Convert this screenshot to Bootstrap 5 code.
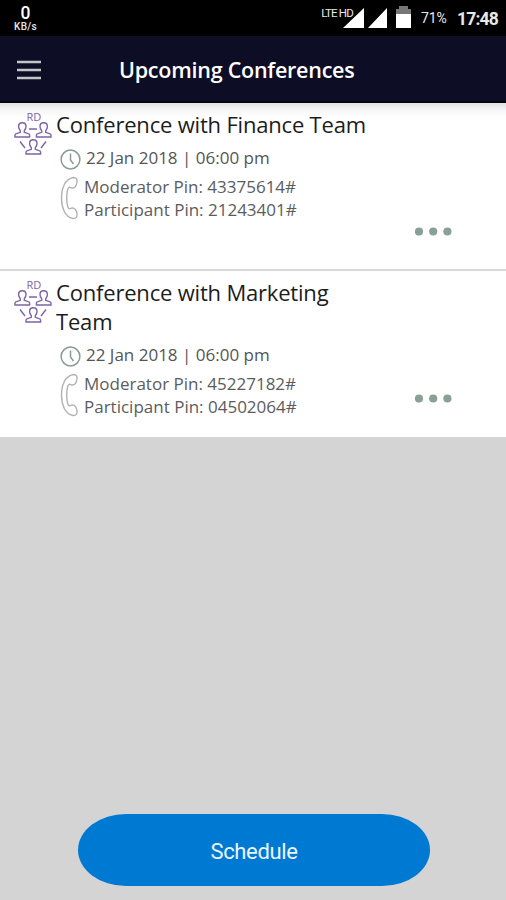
<!DOCTYPE html>
<html lang="en">
<head>
<meta charset="utf-8">
<meta name="viewport" content="width=device-width, initial-scale=1">
<title>Upcoming Conferences</title>
<link href="https://cdn.jsdelivr.net/npm/bootstrap@5.3.0/dist/css/bootstrap.min.css" rel="stylesheet">
<style>
body{background:#d4d4d4;font-family:"Open Sans","Noto Sans",sans-serif;height:900px;overflow:hidden}
svg{display:block;flex:none;overflow:visible}
.statusbar{height:36px;background:#000;color:#e8e8e8;font-family:Roboto,sans-serif;padding:0 10px 0 13px}
.speed{width:25px;padding-top:4px}
.speed-num{font-size:17.5px;line-height:18px;font-weight:500;color:#fff}
.speed-unit{font-size:10px;line-height:10px;font-weight:500;white-space:nowrap;letter-spacing:.3px}
.net{font-size:11.500px;line-height:12px;letter-spacing:-.8px;margin:7px -10px 0 0;white-space:nowrap;position:relative}
.pct{font-size:14px;line-height:36px;letter-spacing:-.1px;margin-left:9px;width:36px}
.clock{font-size:17.5px;line-height:36px;font-weight:700;padding-top:1px;width:39px;white-space:nowrap;letter-spacing:-.8px}
.appbar{height:67px;background:#0d0e25;border-bottom:2px solid #05050d;padding:0 17px}
.appbar svg{margin-top:2px}
.page-title{font-size:21.500px;line-height:30px;font-weight:600;color:#fff;margin:2px 0 0 78px;letter-spacing:-.24px;white-space:nowrap}
.conf{height:168px;background:#fff;border-bottom:2px solid #d9d9d9;padding:7px 54px 0 14px}
.conf:last-child{height:166px;border:0}
.conf:first-child{background:linear-gradient(#e2e2e2,#f6f6f6 7px,#fff 15px)}
.team-icon{margin-top:1px}
.conf-title{font-size:22px;line-height:29px;color:#1c1c1c;margin:0;font-weight:400;white-space:nowrap;letter-spacing:-.19px}
.when{font-size:17px;line-height:24px;color:#555;gap:5px;margin:7px 0 0 4px;white-space:nowrap}
.when svg{margin-top:2px}
.pins{font-size:17px;line-height:22.5px;color:#5c5c5c;gap:5px;margin:6px 0 0 4px;white-space:nowrap}
.pins svg{margin-top:-2px}
.dots{width:37px;margin-top:117px}
.conf:last-child .dots{margin-top:116px}
.btn.schedule{width:352px;height:72px;border:0;border-radius:48px/36px;background:#0079d3;color:#eaf5ff;font:400 22px/72px Roboto,sans-serif;letter-spacing:-.35px;padding:2px 0 0;margin:auto auto 14px 78px}
</style>
</head>
<body class="d-flex flex-column">
<svg width="0" height="0" class="position-absolute" aria-hidden="true">
<defs>
<g id="person"><path d="M.7 15v-1.800q0-1.200 1.500-1.600L6 10.300V8.700Q4.300 7 4.300 4.300Q4.300.7 8 .7t3.700 3.600Q11.700 7 10 8.700V10.300l3.800 1.300q1.500.4 1.500 1.600V15z"/></g>
<symbol id="team" viewBox="0 0 38 45"><g fill="none" stroke="#7d64a5" stroke-width="1.400"><use href="#person" transform="translate(.3 11)"/><use href="#person" transform="translate(21.700 11)"/><use href="#person" transform="translate(11.300 28)"/><path d="M15 18h8M6 30.500l5 6.500M32 30.500l-5 6.500"/></g></symbol>
<symbol id="clock" viewBox="0 0 21 21"><g fill="none" stroke="#8b9b95" stroke-width="1.500"><circle cx="10.500" cy="10.500" r="9.400"/><path d="M10.500 4.500v6.500l3 4"/></g></symbol>
<symbol id="phone" viewBox="0 0 19 44"><path d="M13.500 1.500C4.500 3 1.500 13 1.500 22S4.500 41 13 42.500c3 .4 4.500-2 4-4.500-.5-3.500-2-6-4.500-6-1.500 0-2.500 1.200-3.500.7-3-3-3-18.500 0-21.400 1-.5 2 .7 3.500.7 2.500 0 4-2.500 4.500-6 .5-2.700-.8-4.500-3.500-4.500z" fill="none" stroke="#b2b2b2" stroke-width="1.400"/></symbol>
<symbol id="dots" viewBox="0 0 37 9"><g fill="#89a097"><circle cx="4" cy="4.500" r="4.100"/><circle cx="18.200" cy="4.500" r="4.100"/><circle cx="32.400" cy="4.500" r="4.100"/></g></symbol>
</defs>
</svg>
<div class="statusbar d-flex justify-content-between">
  <div class="speed text-center"><div class="speed-num">0</div><div class="speed-unit">KB/s</div></div>
  <div class="d-flex">
    <div class="net">LTE HD</div>
    <svg width="69" height="36" viewBox="0 0 69 36"><path d="M0 28L21 8v20zM25 28L44 8v20z" fill="#fff"/><path d="M53 9h3V6h9v3h3v6H53z" fill="#777"/><path d="M53 14h15v14H53z" fill="#fff"/></svg>
    <div class="pct">71%</div>
    <div class="clock">17:48</div>
  </div>
</div>
<nav class="appbar d-flex align-items-center">
  <svg width="24" height="20" viewBox="0 0 24 20"><path d="M0 2h24M0 10h24M0 18h24" stroke="#c4c4c8" stroke-width="2.300"/></svg>
  <h1 class="page-title">Upcoming Conferences</h1>
</nav>
<main>
  <article class="conf d-flex">
    <svg class="team-icon" width="38" height="45"><use href="#team"/><text x="12.500" y="10" font-size="11" fill="#7d64a5">RD</text></svg>
    <div class="flex-grow-1 ps-1">
      <h2 class="conf-title">Conference with Finance Team</h2>
      <div class="when d-flex align-items-center"><svg width="21" height="21"><use href="#clock"/></svg><span>22 Jan 2018 | 06:00 pm</span></div>
      <div class="pins d-flex align-items-center"><svg width="19" height="44"><use href="#phone"/></svg><div>Moderator Pin: 43375614#<br>Participant Pin: 21243401#</div></div>
    </div>
    <svg class="dots" width="37" height="9"><use href="#dots"/></svg>
  </article>
  <article class="conf d-flex">
    <svg class="team-icon" width="38" height="45"><use href="#team"/><text x="12.500" y="10" font-size="11" fill="#7d64a5">RD</text></svg>
    <div class="flex-grow-1 ps-1">
      <h2 class="conf-title">Conference with Marketing<br>Team</h2>
      <div class="when d-flex align-items-center"><svg width="21" height="21"><use href="#clock"/></svg><span>22 Jan 2018 | 06:00 pm</span></div>
      <div class="pins d-flex align-items-center"><svg width="19" height="44"><use href="#phone"/></svg><div>Moderator Pin: 45227182#<br>Participant Pin: 04502064#</div></div>
    </div>
    <svg class="dots" width="37" height="9"><use href="#dots"/></svg>
  </article>
</main>
<button class="btn btn-primary schedule" type="button">Schedule</button>
<script src="https://cdn.jsdelivr.net/npm/bootstrap@5.3.0/dist/js/bootstrap.bundle.min.js"></script>
</body>
</html>
